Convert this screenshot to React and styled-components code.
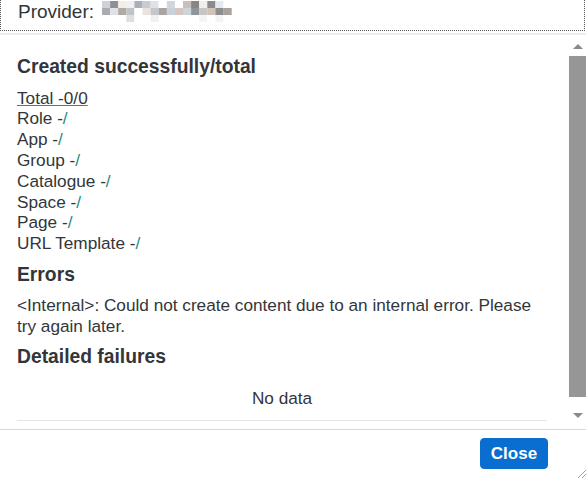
import styled, { createGlobalStyle } from "styled-components";

const GlobalStyle = createGlobalStyle`
  html, body {
    margin: 0;
    padding: 0;
    background: #fff;
  }
  body {
    font-family: "Liberation Sans", Arial, sans-serif;
    color: #32363a;
  }
`;

const Dialog = styled.div`
  width: 586px;
  height: 478px;
  display: flex;
  flex-direction: column;
  background: #fff;
  overflow: hidden;
  position: relative;
`;

const Header = styled.div`
  height: 35px;
  margin-top: -4px;
  flex: none;
  display: flex;
  align-items: center;
  gap: 8px;
  padding: 4px 0 0 18px;
  box-sizing: border-box;
  outline: 1px dotted #555;
  outline-offset: -1px;
  margin-right: 1px;
`;

const ProviderLabel = styled.span`
  font-size: 19px;
  line-height: 22px;
  margin-top: -8px;
`;

const HeaderShadow = styled.div`
  flex: none;
  height: 2px;
  margin-top: 2px;
  background: linear-gradient(#e6e6e6, #f3f3f3);
`;

const Body = styled.div`
  flex: 1;
  display: flex;
  min-height: 0;
`;

const Content = styled.div`
  flex: 1;
  padding: 20px 22px 0 17px;
`;

const Heading = styled.h3`
  margin: ${(p) => (p.$first ? "0" : "8.6px")} 0 8.6px;
  font-size: 19.3px;
  line-height: 24px;
  font-weight: bold;
`;

const Lines = styled.div`
  font-size: 17.2px;
  line-height: 20.8px;
`;

const TotalLine = styled.div`
  text-decoration: underline;
  text-decoration-color: #6a6d70;
`;

const Slash = styled.span`
  color: #1f8c84;
`;

const ErrorText = styled.div`
  font-size: 17.2px;
  line-height: 20.8px;
`;

const NoDataRow = styled.div`
  margin-top: 3px;
  height: 42px;
  display: flex;
  align-items: center;
  justify-content: center;
  font-size: 17.2px;
  border-bottom: 1px solid #e5e5e5;
`;

const ScrollTrack = styled.div`
  width: 17px;
  flex: none;
  display: flex;
  flex-direction: column;
  align-items: center;
`;

const Arrow = styled.div`
  width: 0;
  height: 0;
  border-left: 5px solid transparent;
  border-right: 5px solid transparent;
  ${(p) =>
    p.$down
      ? "border-top: 5px solid #8a8a8a; margin-top: 16px;"
      : "border-bottom: 5px solid #8a8a8a; margin-top: 9px;"}
`;

const Thumb = styled.div`
  width: 17px;
  height: 341px;
  margin-top: 7px;
  background: #969696;
`;

const Footer = styled.div`
  height: 49px;
  flex: none;
  border-top: 1px solid #d9d9d9;
  display: flex;
  justify-content: flex-end;
  align-items: flex-start;
  padding: 8px 38px 0 0;
  box-sizing: border-box;
`;

const CloseButton = styled.button`
  width: 68px;
  height: 31px;
  border-radius: 4px;
  border: 1px solid #0a6ed1;
  background: #0a6ed1;
  color: #fff;
  font-family: inherit;
  font-size: 17px;
  font-weight: bold;
  cursor: pointer;
`;

const Grip = styled.svg`
  position: absolute;
  right: 0;
  bottom: 0;
`;

const pixelRows = [
  ["#cfd1d4", "#8c9099", "#f6ede6", "#eef0f3", "#aab0b8", "#c8ccd2", "#dfe3e9", "#fff", "#d2d5d9", "#fff", "#c9c0b9", "#8a8580", "#f1ede9", "#8b8b8f", "#e4e8ef", "#fff"],
  ["#a9adb3", "#e0e3e6", "#b0aaa5", "#c0c3c8", "#fff", "#e8e3de", "#c4c6c8", "#a9a49f", "#c8d2dc", "#d6c8c0", "#ccd4dc", "#8f959c", "#c8c5c3", "#d0c4b8", "#8e8c8c", "#a8a39e"],
  ["#fff", "#fff", "#fff", "#dde0e3", "#fff", "#fff", "#f0f0f0", "#fff", "#fff", "#fff", "#fff", "#fff", "#f6f4f2", "#fff", "#f6f3f0", "#fff"],
];

const Pixelated = () => (
  <svg width="130" height="24" viewBox="0 0 130 24" style={{ marginTop: -6 }}>
    {pixelRows.map((row, r) =>
      row.map((c, i) => (
        <rect key={`${r}-${i}`} x={i * 8.1} y={r * 7} width="8.2" height="7.1" fill={c} />
      ))
    )}
  </svg>
);

const items = ["Role", "App", "Group", "Catalogue", "Space", "Page", "URL Template"];

export default function App() {
  return (
    <>
      <GlobalStyle />
      <Dialog>
        <Header>
          <ProviderLabel>Provider:</ProviderLabel>
          <Pixelated />
        </Header>
        <HeaderShadow />
        <Body>
          <Content>
            <Heading $first>Created successfully/total</Heading>
            <Lines>
              <TotalLine>Total -0/0</TotalLine>
              {items.map((name) => (
                <div key={name}>
                  {name} -<Slash>/</Slash>
                </div>
              ))}
            </Lines>
            <Heading>Errors</Heading>
            <ErrorText>
              &lt;Internal&gt;: Could not create content due to an internal error. Please try again later.
            </ErrorText>
            <Heading>Detailed failures</Heading>
            <NoDataRow>No data</NoDataRow>
          </Content>
          <ScrollTrack>
            <Arrow />
            <Thumb />
            <Arrow $down />
          </ScrollTrack>
        </Body>
        <Footer>
          <CloseButton>Close</CloseButton>
        </Footer>
        <Grip width="9" height="9" viewBox="0 0 9 9">
          <path d="M9 1 L1 9 M9 5 L5 9" stroke="#8aa0c0" strokeWidth="1" />
        </Grip>
      </Dialog>
    </>
  );
}
